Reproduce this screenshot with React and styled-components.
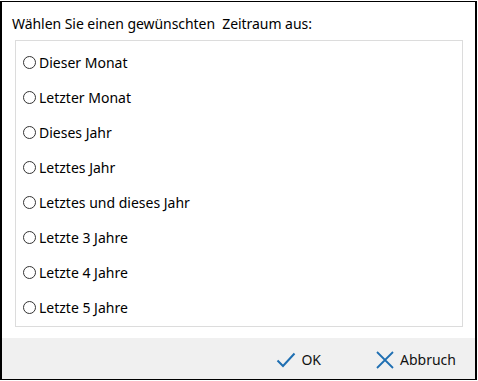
import React from "react";
import styled, { createGlobalStyle } from "styled-components";

const GlobalStyle = createGlobalStyle`
  html, body {
    margin: 0;
    padding: 0;
    background: #ffffff;
  }
  body {
    font-family: "Noto Sans", "Open Sans", sans-serif;
    color: #000000;
  }
`;

const Window = styled.div`
  box-sizing: border-box;
  margin-top: 1px;
  width: 477px;
  height: 379px;
  border: 1px solid #000000;
  border-left-width: 2px;
  border-right-width: 2px;
  background: #ffffff;
  display: flex;
  flex-direction: column;
`;

const Body = styled.div`
  flex: 1;
  display: flex;
  flex-direction: column;
  padding: 12px 12px 9px 13px;
`;

const Prompt = styled.div`
  font-size: 14px;
  line-height: 20px;
  margin-left: -3px;
  letter-spacing: -0.05px;
`;

const GroupBox = styled.div`
  box-sizing: border-box;
  margin-top: 6px;
  height: 287px;
  border: 1px solid #dcdcdc;
  display: flex;
  flex-direction: column;
  padding: 4px 0 0 7px;
`;

const Option = styled.label`
  height: 35px;
  display: flex;
  align-items: center;
  font-size: 14px;
  cursor: default;
`;

const Circle = styled.span`
  box-sizing: border-box;
  width: 13px;
  height: 13px;
  border-radius: 50%;
  border: 1px solid #333333;
  margin-right: 3px;
  flex: none;
`;

const Footer = styled.div`
  height: 41px;
  background: #f0f0f0;
  display: flex;
  align-items: center;
  justify-content: flex-end;
  padding-right: 19px;
  gap: 54px;
`;

const Button = styled.div`
  display: flex;
  align-items: center;
  gap: 5px;
  font-size: 14px;
  padding-top: 2px;
  color: #111111;
`;

const options = [
  "Dieser Monat",
  "Letzter Monat",
  "Dieses Jahr",
  "Letztes Jahr",
  "Letztes und dieses Jahr",
  "Letzte 3 Jahre",
  "Letzte 4 Jahre",
  "Letzte 5 Jahre",
];

const Check = () => (
  <svg width="20" height="18" viewBox="0 0 20 18">
    <path d="M1.5 9.5 L7 15 L18.5 2.5" fill="none" stroke="#1f6fb2" strokeWidth="2" />
  </svg>
);

const Cross = () => (
  <svg width="20" height="20" viewBox="0 0 20 20">
    <path d="M2 2 L18 18 M18 2 L2 18" fill="none" stroke="#1f6fb2" strokeWidth="1.8" />
  </svg>
);

export default function App() {
  return (
    <>
      <GlobalStyle />
      <Window>
        <Body>
          <Prompt>Wählen Sie einen gewünschten&nbsp; Zeitraum aus:</Prompt>
          <GroupBox>
            {options.map((o) => (
              <Option key={o}>
                <Circle />
                {o}
              </Option>
            ))}
          </GroupBox>
        </Body>
        <Footer>
          <Button>
            <Check />
            OK
          </Button>
          <Button>
            <Cross />
            Abbruch
          </Button>
        </Footer>
      </Window>
    </>
  );
}
